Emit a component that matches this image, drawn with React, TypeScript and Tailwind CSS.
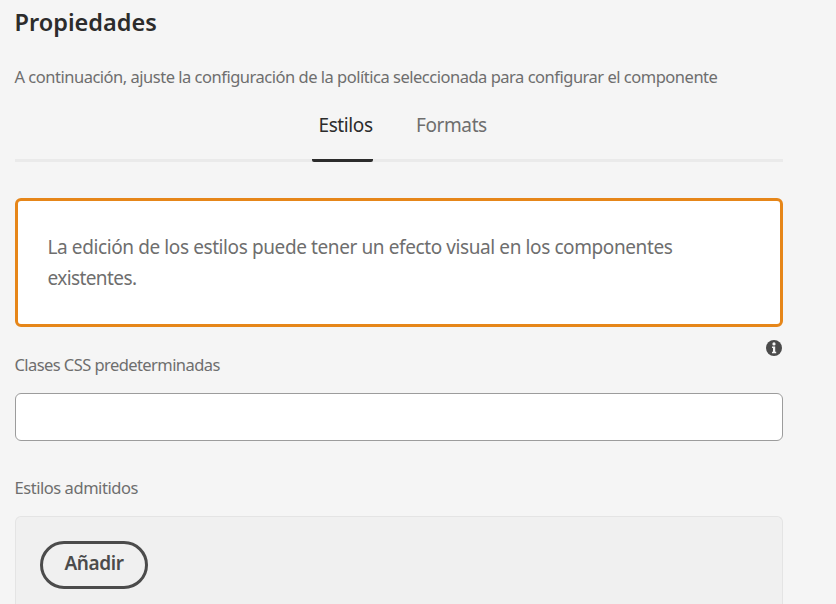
import React from "react";

export default function App() {
  return (
    <main className="h-[604px] w-[836px] overflow-hidden bg-[#f5f5f5] pr-[53px] pl-[15px] font-['Noto_Sans','Open_Sans',sans-serif] text-[#6e6e6e] [font-variant-ligatures:none]">
      <h1 className="-ml-[0.5px] h-11 pt-[5px] text-[23.5px] leading-[34px] font-semibold text-[#2c2c2c]">
        Propiedades
      </h1>
      <p className="-ml-[0.5px] h-[60px] pt-5 text-[16.5px] leading-[26px] tracking-[-0.49px] whitespace-nowrap">
        A continuación, ajuste la configuración de la política seleccionada para configurar el componente
      </p>

      <nav className="flex h-[58px] border-b-[3px] border-[#eaeaea] pl-[297px] text-[19px] leading-[30px] tracking-[-0.4px]">
        <button className="-mb-[3px] flex h-[58px] w-[61px] items-start rounded-[2px] border-b-[3px] border-[#2c2c2c] pt-[6px] pl-[6.5px] text-left whitespace-nowrap text-[#2c2c2c]">
          Estilos
        </button>
        <button className="ml-[43px] flex items-start pt-[6px] whitespace-nowrap">Formats</button>
      </nav>

      <section className="mt-9 h-[129px] rounded-[6px] border-[3px] border-[#e68619] bg-white pt-[31px] pl-[29.5px] text-[19px] leading-[31px] tracking-[-0.4px]">
        <p className="whitespace-nowrap">La edición de los estilos puede tener un efecto visual en los componentes</p>
        <p className="tracking-[-0.6px]">existentes.</p>
      </section>

      <div className="flex h-[66px] items-start justify-between">
        <label htmlFor="css-classes" className="-ml-[0.5px] pt-[25px] text-[16.5px] leading-[26px] tracking-[-0.57px] whitespace-nowrap">
          Clases CSS predeterminadas
        </label>
        <svg className="mt-[12.5px] mr-px size-4" viewBox="0 0 16 16" aria-label="Información">
          <circle cx="8" cy="8" r="8" fill="#4b4b4b" />
          <circle cx="8" cy="3.9" r="1.6" fill="#f5f5f5" />
          <path d="M6 6.5H9.2V11.7H10.2V13.3H6V11.7H7V8.1H6Z" fill="#f5f5f5" />
        </svg>
      </div>
      <input id="css-classes" className="block h-12 w-full rounded-[6px] border border-[#9c9c9c] bg-white px-4" />

      <h2 className="-ml-[0.5px] h-[75px] pt-[34px] text-[16.5px] leading-[26px] tracking-[-0.45px]">Estilos admitidos</h2>
      <section className="h-[96px] rounded-t-[6px] border border-b-0 border-[#e4e4e4] bg-[#f0f0f0] pt-6 pl-6">
        <button className="flex h-12 w-[108px] items-start justify-center rounded-full border-[3px] border-[#4b4b4b] pt-[4px] text-[19px] leading-[30px] font-semibold tracking-[-0.4px] text-[#4b4b4b]">
          Añadir
        </button>
      </section>
    </main>
  );
}
